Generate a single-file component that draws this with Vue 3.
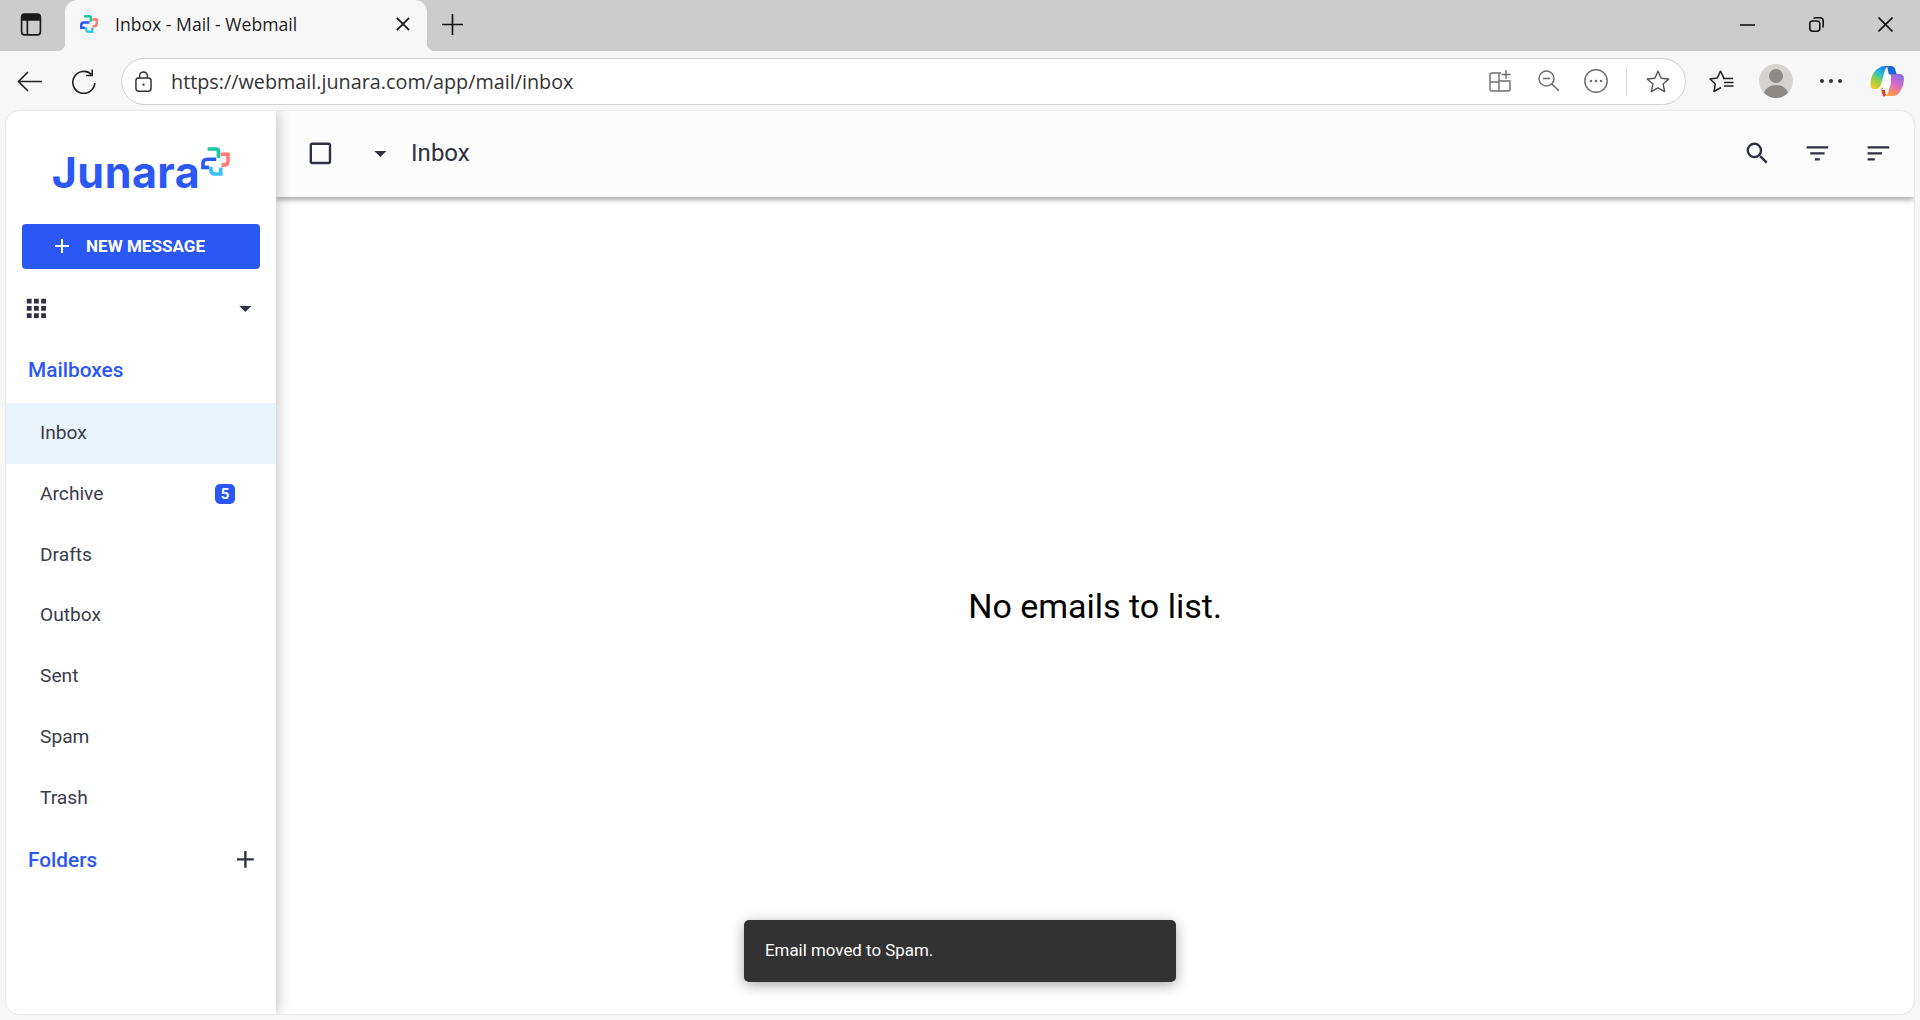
<script setup>
const mailboxes = [
  { name: 'Inbox', active: true },
  { name: 'Archive', count: 5 },
  { name: 'Drafts' },
  { name: 'Outbox' },
  { name: 'Sent' },
  { name: 'Spam' },
  { name: 'Trash' },
]
const markPieces = [
  { d: 'M20 6H45Q53 6 53 14V33', c: '#12c9a0' },
  { d: 'M60 22H82V42Q82 55 70 55H62', c: '#ff7a78' },
  { d: 'M30 60V70Q30 82 42 82H60V62', c: '#35c4f5' },
  { d: 'M46 37H20Q6 37 6 50V62H24', c: '#2b57f5' },
]
const icons = {
  search: 'M15.5 14h-.79l-.28-.27A6.471 6.471 0 0 0 16 9.5 6.5 6.5 0 1 0 9.5 16c1.61 0 3.09-.59 4.23-1.57l.27.28v.79l5 4.99L20.49 19l-4.99-5zm-6 0C7.01 14 5 11.99 5 9.5S7.01 5 9.5 5 14 7.01 14 9.5 11.99 14 9.5 14z',
  filter: 'M10 18h4v-2h-4v2zM3 6v2h18V6H3zm3 7h12v-2H6v2z',
  sort: 'M3 18h6v-2H3v2zM3 6v2h18V6H3zm0 7h12v-2H3v2z',
  apps: 'M4 8h4V4H4v4zm6 12h4v-4h-4v4zm-6 0h4v-4H4v4zm0-6h4v-4H4v4zm6 0h4v-4h-4v4zm6-10v4h4V4h-4zm-6 4h4V4h-4v4zm6 6h4v-4h-4v4zm0 6h4v-4h-4v4z',
  drop: 'M7 10l5 5 5-5z',
  box: 'M19 5v14H5V5h14m0-2H5c-1.1 0-2 .9-2 2v14c0 1.1.9 2 2 2h14c1.1 0 2-.9 2-2V5c0-1.1-.9-2-2-2z',
  add: 'M19 13h-6v6h-2v-6H5v-2h6V5h2v6h6v2z',
}
</script>

<template>
  <div class="window">
    <div class="tabstrip">
      <svg class="tab-toggle" viewBox="0 0 20 22" fill="none" stroke="#1a1a1a" stroke-width="1.6">
        <rect x="1" y="1" width="18" height="20" rx="3" />
        <path d="M1 6.5h18M6.5 7v14" />
        <path d="M3 1.5h14a1.5 1.5 0 0 1 1.5 1.5v3h-17V3A1.5 1.5 0 0 1 3 1.5z" fill="#1a1a1a" stroke="none" />
      </svg>
      <div class="tab">
        <svg class="favicon" viewBox="0 0 88 88" fill="none" stroke-width="12">
          <path v-for="p in markPieces" :key="p.c" :d="p.d" :stroke="p.c" />
        </svg>
        <span class="tab-title">Inbox - Mail - Webmail</span>
        <svg class="tab-close" viewBox="0 0 12 12" stroke="#111" stroke-width="1.4"><path d="M.7.7l10.6 10.6M11.3.7L.7 11.3" /></svg>
      </div>
      <svg class="new-tab" viewBox="0 0 18 18" stroke="#111" stroke-width="1.4"><path d="M9 0v18M0 9h18" /></svg>
      <div class="caption">
        <svg class="cap-min" viewBox="0 0 15 2" stroke="#111" stroke-width="1.6"><path d="M0 1h15" /></svg>
        <svg class="cap-restore" viewBox="0 0 15 15" fill="none" stroke="#111" stroke-width="1.6">
          <rect x=".8" y="4" width="10" height="10.2" rx="2.6" />
          <path d="M4.5 1.2Q5.2.8 6.4.8h4.4q3.4 0 3.4 3.4v4.4q0 1.2-.5 1.9" />
        </svg>
        <svg class="cap-close" viewBox="0 0 15 15" stroke="#111" stroke-width="1.6"><path d="M.5.5l14 14M14.5.5l-14 14" /></svg>
      </div>
    </div>

    <div class="toolbar">
      <svg class="tb-back" viewBox="0 0 25 21" fill="none" stroke="#222" stroke-width="1.6"><path d="M25 10.500H1.500M11 1L1.500 10.500 11 20" /></svg>
      <svg class="tb-reload" viewBox="0 0 25 25" fill="none" stroke="#222" stroke-width="1.6">
        <path d="M20.500 5.500A11 11 0 1 0 23.800 14" />
        <path d="M21.200 0.500v6h-6" />
      </svg>
      <div class="omnibox">
        <svg class="lock" viewBox="0 0 16 20" fill="none" stroke="#333" stroke-width="1.4">
          <rect x=".8" y="6.7" width="14.4" height="12.5" rx="2.6" />
          <path d="M4.3 6.7V4.6a3.7 3.7 0 0 1 7.4 0v2.1" />
          <circle cx="8" cy="13" r="1.1" fill="#333" stroke="none" />
        </svg>
        <span class="url">https://webmail.junara.com/app/mail/inbox</span>
        <svg class="omni-tiles" viewBox="0 0 22 22" fill="none" stroke="#6e6e6e" stroke-width="1.4">
          <path d="M12 3H3a2 2 0 0 0-2 2v14a2 2 0 0 0 2 2h16a2 2 0 0 0 2-2v-8H10V3M1 12h9v9M17 0v9M12.500 4.500h9" />
        </svg>
        <svg class="omni-zoom" viewBox="0 0 21 22" fill="none" stroke="#6e6e6e" stroke-width="1.5">
          <circle cx="8.500" cy="8.500" r="7.500" /><path d="M5 8.500h7M14 14l7 7" />
        </svg>
        <svg class="omni-more" viewBox="0 0 24 24" fill="none" stroke="#6e6e6e" stroke-width="1.4">
          <circle cx="12" cy="12" r="11.200" />
          <g fill="#6e6e6e" stroke="none"><circle cx="7" cy="12" r="1.300" /><circle cx="12" cy="12" r="1.300" /><circle cx="17" cy="12" r="1.300" /></g>
        </svg>
        <span class="omni-sep"></span>
        <svg class="omni-star" viewBox="0 0 24 23" fill="none" stroke="#555" stroke-width="1.4" stroke-linejoin="round">
          <path d="M12 1.200l3.200 7 7.600.8-5.700 5.100 1.600 7.500L12 17.800l-6.700 3.800 1.600-7.500L1.200 9l7.600-.8z" />
        </svg>
      </div>
      <svg class="tb-favs" viewBox="0 0 25 23" fill="none" stroke="#222" stroke-width="1.500" stroke-linejoin="round">
        <path d="M12 17.500l-7 4 1.300-7.500L1 9l7.200-1L11.500 1.200 15 8.200" />
        <path d="M14 8.500h10M15 12.500h9.500M15 16h9.500" />
      </svg>
      <div class="avatar">
        <span class="avatar-head"></span>
        <span class="avatar-body"></span>
      </div>
      <div class="tb-dots"><i></i><i></i><i></i></div>
      <svg class="copilot" viewBox="0 0 34 32">
        <defs>
          <linearGradient id="cpA" x1="0.7" y1="0" x2="0.2" y2="1">
            <stop offset="0" stop-color="#1b7cf0" /><stop offset=".35" stop-color="#2cc1c9" /><stop offset=".65" stop-color="#8fd13f" /><stop offset="1" stop-color="#f7c92f" />
          </linearGradient>
          <linearGradient id="cpB" x1="0.7" y1="0" x2="0.3" y2="1">
            <stop offset="0" stop-color="#8a6be8" /><stop offset=".45" stop-color="#d56bc6" /><stop offset=".8" stop-color="#fa8a6a" /><stop offset="1" stop-color="#fb9f4a" />
          </linearGradient>
        </defs>
        <path fill="#1766d8" d="M17 1h4q3 0 4 3l2 6h-8z" />
        <path fill="url(#cpA)" d="M9 3Q11 1 15 1h4q-3 .5-4 4l-4 14q-1 4-4 5H4q-3.500 0-3.500-4Q.5 13 3.500 8 6 4 9 3z" />
        <path fill="#e8452f" d="M11 24l3-2 2 8q-1 1.500-3 1.500z" />
        <path fill="url(#cpB)" d="M21 9h8q5 0 5 5 0 6-3 11-3 6-8 6h-9q3 0 4-3l3-10z" />
        <path fill="#fff" d="M16 9.500h5l-3 10.500q-1 4-3 5h-4q2-1 3-4z" />
      </svg>
    </div>

    <div class="app">
      <aside class="sidebar">
        <div class="logo">
          <span class="logo-word">Junara</span>
          <svg class="logo-mark" viewBox="0 0 88 88" fill="none" stroke-width="11">
            <path v-for="p in markPieces" :key="p.c" :d="p.d" :stroke="p.c" />
          </svg>
        </div>
        <button class="compose">
          <svg viewBox="0 0 24 24" class="compose-icon"><path :d="icons.add" /></svg>
          <span>NEW MESSAGE</span>
        </button>
        <div class="apps-row">
          <svg class="m-icon" viewBox="0 0 24 24"><path :d="icons.apps" /></svg>
          <svg class="m-icon" viewBox="0 0 24 24"><path :d="icons.drop" /></svg>
        </div>
        <h2 class="heading mailboxes">Mailboxes</h2>
        <ul class="list">
          <li v-for="m in mailboxes" :key="m.name" class="item" :class="{ active: m.active }">
            <span class="item-name">{{ m.name }}</span>
            <b v-if="m.count" class="badge">{{ m.count }}</b>
          </li>
        </ul>
        <div class="folders">
          <h2 class="heading">Folders</h2>
          <svg class="m-icon folders-add" viewBox="0 0 24 24"><path :d="icons.add" /></svg>
        </div>
      </aside>

      <main class="main">
        <header class="header">
          <svg class="m-icon" viewBox="0 0 24 24"><path :d="icons.box" /></svg>
          <svg class="m-icon header-drop" viewBox="0 0 24 24"><path :d="icons.drop" /></svg>
          <span class="header-title">Inbox</span>
          <div class="header-actions">
            <svg class="m-icon" viewBox="0 0 24 24"><path :d="icons.search" /></svg>
            <svg class="m-icon" viewBox="0 0 24 24"><path :d="icons.filter" /></svg>
            <svg class="m-icon" viewBox="0 0 24 24"><path :d="icons.sort" /></svg>
          </div>
        </header>
        <div class="empty">No emails to list.</div>
        <div class="toast">Email moved to Spam.</div>
      </main>
    </div>
  </div>
</template>

<style>
html, body { margin: 0; padding: 0; }
</style>

<style scoped>
.window {
  height: 1020px;
  display: flex;
  flex-direction: column;
  background: #f7f7f7;
  font-family: Roboto, "Liberation Sans", sans-serif;
  overflow: hidden;
}
.tabstrip {
  height: 51px;
  flex: none;
  background: #cccccc;
  display: flex;
  align-items: center;
}
.tab-toggle { width: 22px; height: 23px; margin: 0 0 3px 19.500px; flex: none; }
.tab {
  position: relative;
  align-self: stretch;
  width: 362px;
  margin-left: 23.500px;
  padding-bottom: 3px;
  box-sizing: border-box;
  background: #f7f7f7;
  border-radius: 12px 12px 0 0;
  display: flex;
  align-items: center;
  flex: none;
}
.tab::before, .tab::after {
  content: "";
  position: absolute;
  bottom: 0;
  width: 8px;
  height: 8px;
}
.tab::before { left: -8px; background: radial-gradient(circle at 0 0, transparent 8px, #f7f7f7 8.5px); }
.tab::after { right: -8px; background: radial-gradient(circle at 100% 0, transparent 8px, #f7f7f7 8.5px); }
.favicon { width: 18px; height: 18px; margin-left: 15px; }
.tab-title {
  margin-left: 17px;
  font: 400 17.600px "Open Sans", "Noto Sans", sans-serif;
  color: #1c1c1c;
  white-space: nowrap;
}
.tab-close { width: 14px; height: 14px; margin-left: auto; margin-right: 17px; }
.new-tab { width: 21px; height: 21px; margin: 0 0 3px 15px; flex: none; }
.caption { margin: 0 0 2px auto; display: flex; align-items: center; padding-right: 27px; }
.cap-min { width: 15px; height: 2px; }
.cap-restore { width: 15px; height: 15px; margin-left: 54px; }
.cap-close { width: 15px; height: 15px; margin-left: 54px; }

.toolbar {
  height: 60px;
  flex: none;
  display: flex;
  align-items: center;
}
.tb-back { width: 25px; height: 21px; margin-left: 17px; flex: none; }
.tb-reload { width: 25px; height: 25px; margin-left: 29px; flex: none; }
.omnibox {
  width: 1565px;
  height: 47px;
  margin-left: 25px;
  box-sizing: border-box;
  border: 1.5px solid #cfcfcf;
  border-radius: 24px;
  background: #fff;
  display: flex;
  align-items: center;
  flex: none;
}
.lock { width: 17px; height: 21px; margin-left: 13px; flex: none; }
.url {
  margin-left: 19px;
  font: 400 19.800px "Open Sans", "Noto Sans", sans-serif;
  color: #333;
  white-space: nowrap;
}
.omni-tiles { width: 22px; height: 22px; margin-left: auto; flex: none; }
.omni-zoom { width: 21px; height: 22px; margin-left: 27px; flex: none; }
.omni-more { width: 24px; height: 24px; margin-left: 25px; flex: none; }
.omni-sep { width: 1px; height: 27px; background: #d6d6d6; margin-left: 18px; flex: none; }
.omni-star { width: 24px; height: 23px; margin-left: 19px; margin-right: 15.500px; flex: none; }
.tb-favs { width: 25px; height: 23px; margin-left: 23px; flex: none; }
.avatar {
  position: relative;
  width: 34px;
  height: 34px;
  margin-left: 25px;
  border-radius: 50%;
  background: #d6d4d0;
  overflow: hidden;
  flex: none;
}
.avatar-head {
  position: absolute;
  left: 10px;
  top: 5px;
  width: 14px;
  height: 14px;
  border-radius: 50%;
  background: #8d8985;
}
.avatar-body {
  position: absolute;
  left: 5px;
  top: 21px;
  width: 24px;
  height: 18px;
  border-radius: 50%;
  background: #8d8985;
}
.tb-dots { display: flex; gap: 5px; margin-left: 27px; flex: none; }
.tb-dots i { width: 4px; height: 4px; border-radius: 50%; background: #333; }
.copilot { width: 34px; height: 32px; margin-left: 28px; flex: none; }

.app {
  flex: none;
  height: 903px;
  margin: 0 6px;
  display: flex;
  background: #fff;
  border-radius: 14px;
  box-shadow: 0 0 2px rgba(0, 0, 0, 0.2);
  overflow: hidden;
}
.sidebar {
  position: relative;
  z-index: 2;
  width: 270px;
  flex: none;
  background: #fff;
  box-shadow: 3px 0 12px rgba(0, 0, 0, 0.2);
}
.logo {
  height: 113px;
  display: flex;
  align-items: flex-start;
  justify-content: center;
  box-sizing: border-box;
  padding-top: 36px;
}
.logo-word {
  font: 700 43px/50px Inter, "Open Sans", sans-serif;
  letter-spacing: 0.5px;
  color: #2b57f5;
}
.logo-mark { width: 29px; height: 29px; margin-left: 1px; }
.compose {
  display: flex;
  align-items: center;
  width: 238px;
  height: 45px;
  margin: 0 16px;
  padding: 0 0 2px 28px;
  box-sizing: border-box;
  border: 0;
  border-radius: 4px;
  background: #2b57f5;
  color: #fff;
  font: 700 17.100px Roboto, sans-serif;
  cursor: pointer;
}
.compose-icon { width: 24px; height: 24px; fill: #fff; margin-right: 12px; }
.m-icon { width: 28.800px; height: 28.800px; fill: #2f3140; flex: none; }
.apps-row {
  display: flex;
  justify-content: space-between;
  align-items: center;
  height: 46px;
  margin: 16px 16px 0;
}
.heading {
  margin: 0;
  height: 46px;
  padding-left: 22px;
  font: 500 20.800px/46px Roboto, sans-serif;
  color: #2b57f5;
}
.mailboxes { margin: 16px 0 10px; }
.list { list-style: none; margin: 0; padding: 0; }
.item {
  height: 60.850px;
  display: flex;
  align-items: center;
  justify-content: space-between;
  padding: 0 41px 0 34px;
  font-size: 19.200px;
  color: #3a3c4a;
}
.item-name { margin-bottom: 2px; }
.item.active { background: #e8f5fe; }
.badge {
  width: 20px;
  height: 20px;
  border-radius: 5px;
  background: #2b57f5;
  color: #fff;
  font: 700 15px/20px Roboto, sans-serif;
  text-align: center;
}
.folders {
  display: flex;
  align-items: center;
  justify-content: space-between;
  height: 62px;
  padding-right: 16px;
}
.folders-add { margin-bottom: 2px; }
.main {
  position: relative;
  flex: 1;
  min-width: 0;
  display: flex;
  flex-direction: column;
}
.header {
  height: 86px;
  flex: none;
  box-sizing: border-box;
  background: #fcfcfc;
  box-shadow: 0 2px 6px rgba(0, 0, 0, 0.42);
  display: flex;
  align-items: center;
  padding: 0 21px 2px 30px;
  position: relative;
  z-index: 1;
}
.header-drop { margin-left: 31px; }
.header-title {
  margin-left: 16.500px;
  font-size: 24px;
  color: #2f3140;
}
.header-actions { margin-left: auto; display: flex; gap: 32px; }
.empty {
  flex: 1;
  display: flex;
  align-items: center;
  justify-content: center;
  font-size: 34px;
  color: #000;
}
.toast {
  position: absolute;
  left: 468px;
  bottom: 32px;
  width: 432px;
  height: 62px;
  box-sizing: border-box;
  padding-left: 21px;
  border-radius: 5px;
  background: #323232;
  color: #fff;
  font-size: 16.900px;
  line-height: 60px;
  box-shadow: 0 3px 14px rgba(0, 0, 0, 0.35);
}
</style>
